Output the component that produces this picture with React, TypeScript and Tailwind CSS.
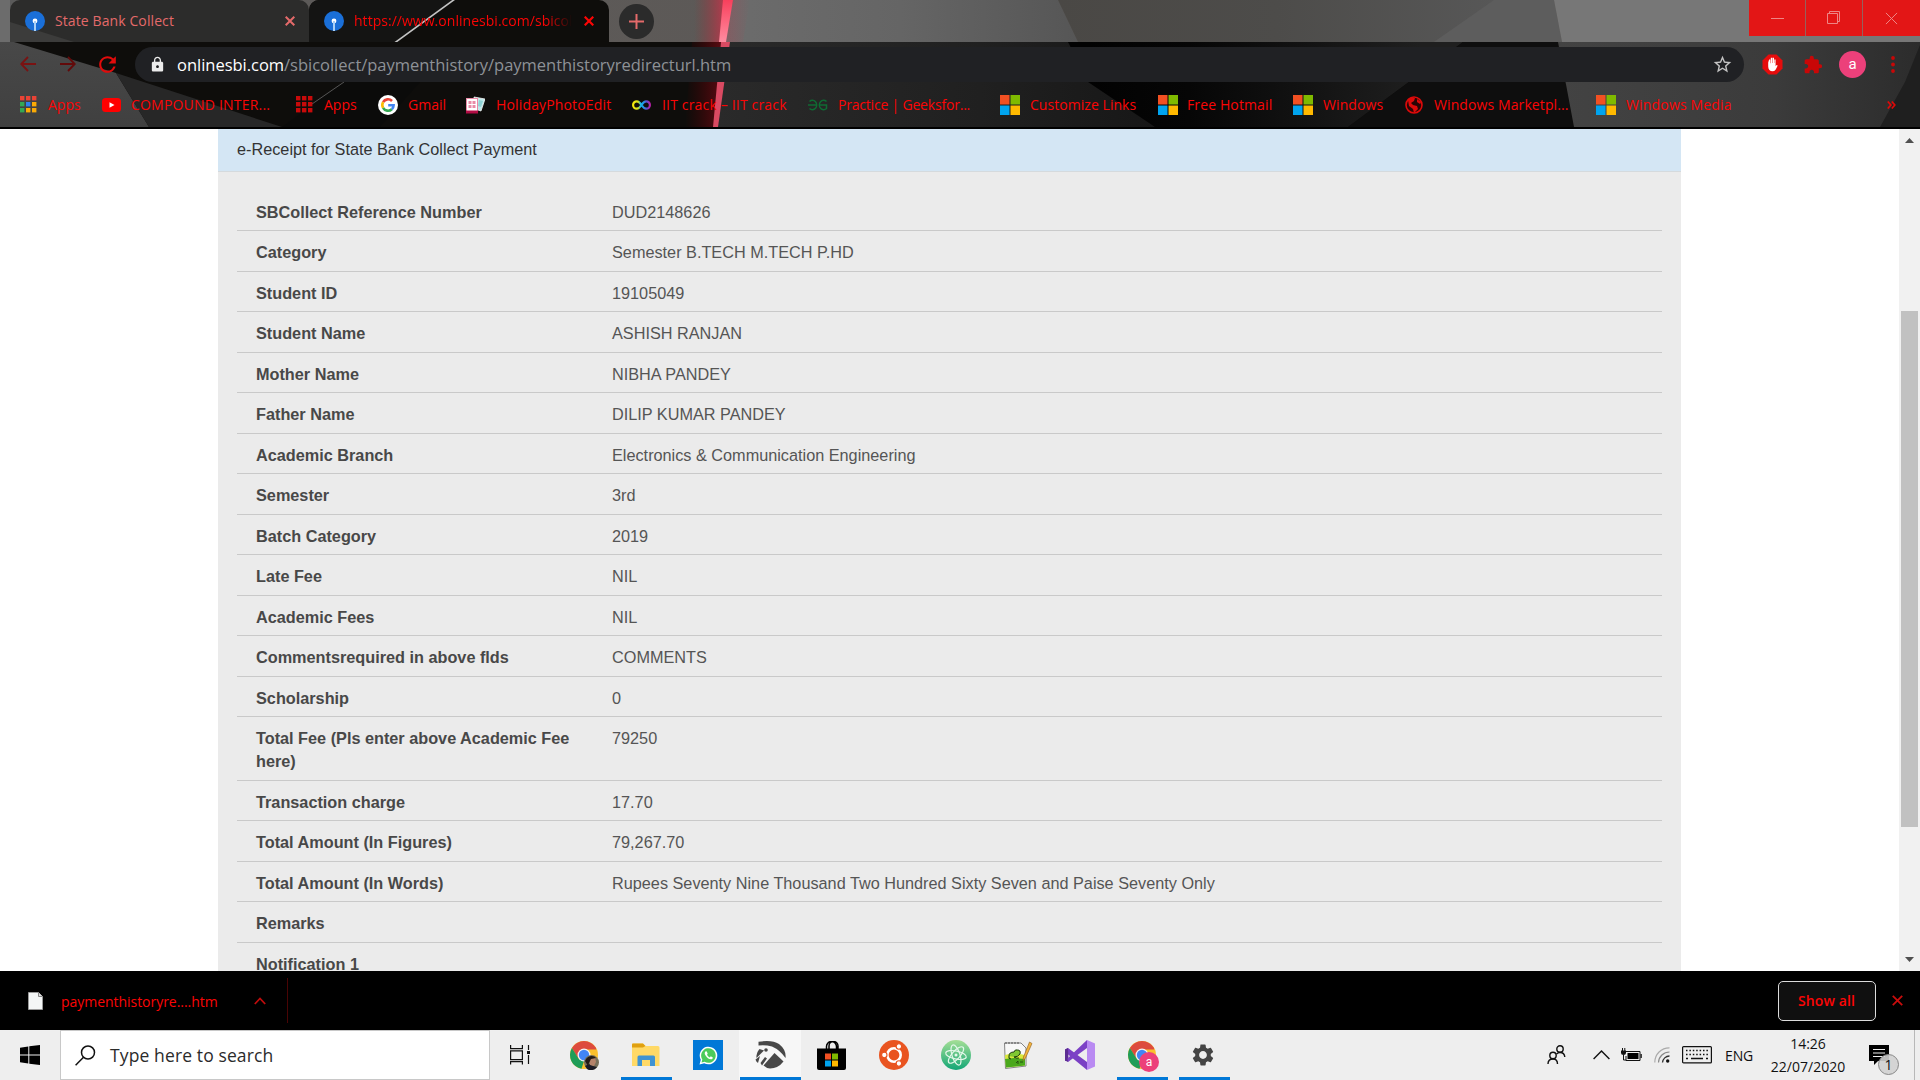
import React from "react";
import { MdSettings, MdExtension, MdLock, MdStarBorder, MdRefresh } from "react-icons/md";

const ui = "font-['Open_Sans','Noto_Sans',sans-serif]";

function FrameArt() {
  return (
    <svg className="absolute inset-0" width="1920" height="129" viewBox="0 0 1920 129">
      <defs>
        <linearGradient id="strip"><stop offset="0" stopColor="#5a5a5a" /><stop offset=".2" stopColor="#5d5a58" /><stop offset="1" stopColor="#5b5654" /></linearGradient>
        <linearGradient id="mid"><stop offset="0" stopColor="#6c6c6c" /><stop offset=".5" stopColor="#656565" /><stop offset="1" stopColor="#565656" /></linearGradient>
        <linearGradient id="slate"><stop offset="0" stopColor="#4a4845" /><stop offset=".5" stopColor="#4d4c4a" /><stop offset="1" stopColor="#575757" /></linearGradient>
        <linearGradient id="low"><stop offset="0" stopColor="#2a2a2a" /><stop offset=".6" stopColor="#202020" /><stop offset="1" stopColor="#171717" /></linearGradient>
        <linearGradient id="lowMid" gradientUnits="userSpaceOnUse" x1="1090" y1="0" x2="1420" y2="0"><stop offset="0" stopColor="#020202" /><stop offset=".3" stopColor="#060606" /><stop offset="1" stopColor="#1f1f1f" /></linearGradient>
        <linearGradient id="lowRight"><stop offset="0" stopColor="#434343" /><stop offset=".6" stopColor="#3b3b3b" /><stop offset="1" stopColor="#2c2c2c" /></linearGradient>
        <linearGradient id="glowTop"><stop offset="0" stopColor="#903030" stopOpacity="0" /><stop offset="1" stopColor="#d0304a" stopOpacity=".75" /></linearGradient>
        <linearGradient id="glowLow"><stop offset="0" stopColor="#500000" stopOpacity="0" /><stop offset="1" stopColor="#6c0a14" stopOpacity=".8" /></linearGradient>
        <linearGradient id="glowRight"><stop offset="0" stopColor="#b04050" stopOpacity=".35" /><stop offset="1" stopColor="#b04050" stopOpacity="0" /></linearGradient>
        <linearGradient id="beam" x1="0" y1="0" x2="0" y2="1"><stop offset="0" stopColor="#f8405c" /><stop offset="1" stopColor="#ff8ca0" /></linearGradient>
        <linearGradient id="bottomLeft" x1="0" y1="0" x2="0" y2="1"><stop offset="0" stopColor="#484848" /><stop offset="1" stopColor="#404040" /></linearGradient>
      </defs>
      <rect width="1920" height="42" fill="url(#strip)" />
      <rect width="10" height="42" fill="#6c6c6c" />
      <path d="M733 0H1058L1078 42H724Z" fill="url(#mid)" />
      <path d="M1058 0H1496L1434 42H1078Z" fill="url(#slate)" />
      <path d="M1494 0H1554L1562 42H1434Z" fill="#5d5d5d" />
      <path d="M1554 0H1920V42H1562Z" fill="#777777" />
      <path d="M694 0H724L720 42H694Z" fill="url(#glowTop)" />
      <path d="M732 0H750L743 42H725Z" fill="url(#glowRight)" />
      <path d="M723 0H733L726 42H719Z" fill="url(#beam)" />
      <rect y="42" width="1920" height="85" fill="#0e0d0b" />
      <path d="M0 42H14L116 73L149 127H0Z" fill="url(#bottomLeft)" />
      <path d="M116 73L282 127H149Z" fill="#272727" />
      <path d="M344 82H420L380 127H282Z" fill="#0b0b0a" />
      <path d="M726 42H1068L1155 127H717Z" fill="url(#low)" />
      <path d="M1068 42H1463L1348 127H1155L1088 82Z" fill="url(#lowMid)" />
      <path d="M1463 42H1558L1574 127H1348Z" fill="#0e0e0e" />
      <path d="M1558 42H1920V127H1574Z" fill="url(#lowRight)" />
      <path d="M1920 45V127H1880L1905 82Z" fill="#1f1f1f" />
      <path d="M692 42H721L714 127H685Z" fill="url(#glowLow)" />
      <path d="M721 42H730L718 127H713Z" fill="#d94a62" />
      <path d="M344 82L312 104" stroke="#555" strokeWidth="1" />
      <rect y="127" width="1920" height="2" fill="#000" />
    </svg>
  );
}

function SbiIcon() {
  return (
    <svg width="20" height="20" viewBox="0 0 20 20" className="shrink-0">
      <circle cx="10" cy="10" r="10" fill="#1a6fd8" />
      <circle cx="10" cy="10" r="2.400" fill="#fff" />
      <rect x="9" y="10" width="2" height="10" fill="#a9d0f7" />
    </svg>
  );
}

function Cross({ size, color, w = 2 }: { size: number; color: string; w?: number }) {
  return (
    <svg width={size} height={size} viewBox="0 0 10 10" className="shrink-0">
      <path d="M.7 .7L9.3 9.3M9.3 .7L.7 9.3" stroke={color} strokeWidth={(w * 10) / size} />
    </svg>
  );
}

function Microsoft() {
  return (
    <svg width="20" height="20" viewBox="0 0 20 20">
      <path d="M0 0H9.5V9.5H0Z" fill="#f25022" />
      <path d="M10.5 0H20V9.5H10.5Z" fill="#7fba00" />
      <path d="M0 10.5H9.5V20H0Z" fill="#00a4ef" />
      <path d="M10.5 10.5H20V20H10.5Z" fill="#ffb900" />
    </svg>
  );
}

function Grid({ colors }: { colors: string[] }) {
  return (
    <svg width="17" height="17" viewBox="0 0 17 17">
      {colors.map((c, i) => (
        <rect key={i} x={(i % 3) * 6} y={Math.floor(i / 3) * 6} width="4.400" height="4.400" fill={c} />
      ))}
    </svg>
  );
}

function GoogleG() {
  return (
    <svg width="20" height="20" viewBox="0 0 20 20">
      <circle cx="10" cy="10" r="10" fill="#fff" />
      <g fill="none" strokeWidth="2.600">
        <path d="M14 6A5.6 5.6 0 0 0 5.1 7.2" stroke="#ea4335" />
        <path d="M5.1 7.2A5.6 5.6 0 0 0 5.1 12.8" stroke="#fbbc05" />
        <path d="M5.1 12.8A5.6 5.6 0 0 0 13.8 14.2" stroke="#34a853" />
        <path d="M13.8 14.2A5.6 5.6 0 0 0 15.6 10.2H10.2" stroke="#4285f4" />
      </g>
    </svg>
  );
}

function HolidayIcon() {
  return (
    <svg width="19" height="18" viewBox="0 0 19 18">
      <path d="M8 1L19 3L15 15L9 13Z" fill="#bfe9ea" stroke="#f4f4f4" strokeWidth=".8" />
      <path d="M13 4L17 5L15 11L12 10Z" fill="#8fd2d4" />
      <rect x=".5" y="2.500" width="11" height="14" fill="#fff" stroke="#e889a6" />
      <path d="M2.500 5H5.500V8H2.500ZM6.500 5H9.500V8H6.500ZM2.500 9H5.500V12H2.500ZM6.500 9H9.500V12H6.500Z" fill="#e88aa6" />
      <rect x="0" y="14.500" width="12" height="3" fill="#b30d45" />
    </svg>
  );
}

function InfinityIcon() {
  return (
    <svg width="19" height="10" viewBox="0 0 19 10">
      <defs>
        <linearGradient id="inf"><stop offset="0" stopColor="#f5e90a" /><stop offset=".3" stopColor="#d6e01c" /><stop offset=".45" stopColor="#14b5e8" /><stop offset=".6" stopColor="#1e9be8" /><stop offset=".8" stopColor="#5a4fd0" /><stop offset="1" stopColor="#b520a8" /></linearGradient>
      </defs>
      <path d="M9.500 5C7.500 2 6.300 1.300 4.800 1.300A3.700 3.700 0 0 0 4.800 8.700C6.300 8.700 7.500 8 9.500 5C11.500 2 12.700 1.300 14.200 1.300A3.700 3.700 0 0 1 14.200 8.700C12.700 8.700 11.500 8 9.500 5Z" fill="none" stroke="url(#inf)" strokeWidth="2.200" />
    </svg>
  );
}

function GeeksIcon() {
  return (
    <svg width="20" height="12" viewBox="0 0 20 12" fill="none" stroke="#0f6b33" strokeWidth="1.500">
      <path d="M1.500 2.500A4.300 4.700 0 1 1 1.500 9.500M0 6H9" />
      <path d="M18.500 2.500A4.300 4.700 0 1 0 18.500 9.500V6H11" />
    </svg>
  );
}

function Globe() {
  return (
    <svg width="18" height="18" viewBox="0 0 18 18">
      <circle cx="9" cy="9" r="8" fill="#2a0505" stroke="#dd0a0a" strokeWidth="1.600" />
      <path d="M3 4C5 1 9 1 10 2L9 5L6 7L8 9L12 10L13 13L9 17L8 13L4 10Z" fill="#dd0a0a" />
      <path d="M12 3L16 6L15 8L12 6Z" fill="#dd0a0a" />
    </svg>
  );
}

function YouTube() {
  return (
    <svg width="19" height="14" viewBox="0 0 19 14">
      <rect width="19" height="14" rx="3.500" fill="#f00" />
      <path d="M7.500 4.200L12.500 7L7.500 9.800Z" fill="#fff" />
    </svg>
  );
}

const appColors = ["#ea4335", "#ea4335", "#ea4335", "#34a853", "#2f80ed", "#fbab05", "#34a853", "#fbab05", "#fbab05"];
const redColors = Array(9).fill("#c80a0a");

const bookmarks: { icon: React.ReactNode; label: string; box: string; text: string }[] = [
  { icon: <Grid colors={appColors} />, label: "Apps", box: "w-[82px]", text: "pl-[11px]" },
  { icon: <YouTube />, label: "COMPOUND INTER...", box: "w-[194px]", text: "pl-[10px] tracking-[0.2px]" },
  { icon: <Grid colors={redColors} />, label: "Apps", box: "w-[82px]", text: "pl-[11px]" },
  { icon: <GoogleG />, label: "Gmail", box: "w-[88px]", text: "pl-[10px]" },
  { icon: <HolidayIcon />, label: "HolidayPhotoEdit", box: "w-[166px]", text: "pl-[11px] tracking-[0.15px]" },
  { icon: <InfinityIcon />, label: "IIT crack – IIT crack", box: "w-[176px]", text: "pl-[11px] tracking-[0.17px]" },
  { icon: <GeeksIcon />, label: "Practice | Geeksfor...", box: "w-[192px]", text: "pl-[10px] tracking-[-0.2px]" },
  { icon: <Microsoft />, label: "Customize Links", box: "w-[158px]", text: "pl-[10px] tracking-[0.05px]" },
  { icon: <Microsoft />, label: "Free Hotmail", box: "w-[135px]", text: "pl-[9px] tracking-[0.12px]" },
  { icon: <Microsoft />, label: "Windows", box: "w-[112px]", text: "pl-[10px] tracking-[0.1px]" },
  { icon: <Globe />, label: "Windows Marketpl...", box: "w-[191px]", text: "pl-[11px] tracking-[0.1px]" },
  { icon: <Microsoft />, label: "Windows Media", box: "w-[150px]", text: "pl-[10px] tracking-[0.17px]" },
];

function BrowserFrame() {
  return (
    <header className={`relative h-[129px] shrink-0 overflow-hidden ${ui}`}>
      <FrameArt />
      <div className="relative flex h-[42px]">
        <div className="relative ml-[10px] flex h-[42px] w-[299px] items-center overflow-hidden rounded-t-[10px] bg-[#2c2c2b] pl-[15px] pr-[14px]">
          <svg className="absolute inset-0" width="299" height="42" viewBox="0 0 299 42">
            <path d="M0 22L64 42H0Z" fill="#3c3c3b" />
          </svg>
          <div className="relative flex w-full items-center">
            <SbiIcon />
            <span className="relative -top-px ml-[10px] flex-1 whitespace-nowrap text-[14px] tracking-[0.1px] text-[#e46a6a]">State Bank Collect</span>
            <Cross size={10} color="#e46a6a" />
          </div>
        </div>
        <div className="relative flex h-[42px] w-[300px] items-center overflow-hidden rounded-t-[10px] bg-[#0e0d0b] pl-[15px] pr-[15px]">
          <svg className="absolute inset-0" width="300" height="42" viewBox="0 0 300 42">
            <path d="M0 0H145L88 42H0Z" fill="#141413" />
            <path d="M146 -1L80 47" stroke="#c4c4c4" strokeWidth="1.600" />
          </svg>
          <div className="relative flex w-full items-center">
            <SbiIcon />
            <span className="relative -top-px ml-[10px] w-[218px] overflow-hidden whitespace-nowrap text-[14px] tracking-[0.03px] text-[#fb0505] [mask-image:linear-gradient(to_right,black_88%,transparent)]">https://www.onlinesbi.com/sbicollect</span>
            <span className="ml-auto"><Cross size={10} color="#fb0505" w={2.2} /></span>
          </div>
        </div>
        <div className="ml-[10px] mt-[4px] flex size-[35px] items-center justify-center rounded-full bg-[#2b2b2b]">
          <svg width="15" height="15" viewBox="0 0 15 15"><path d="M7.500 0V15M0 7.500H15" stroke="#e46a6a" strokeWidth="2" /></svg>
        </div>
        <div className="ml-auto grid h-[36px] w-[171px] grid-cols-[56px_58px_57px] bg-[#e31616]">
          <div className="flex items-center justify-center"><div className="h-px w-[13px] bg-[#ee8585]" /></div>
          <div className="flex items-center justify-center border-x border-[#96605c]">
            <svg width="14" height="14" viewBox="0 0 14 14" fill="none" stroke="#ee8585"><path d="M.5 2.500H10.500V12.500H.5ZM2.500 2.500V.5H12.500V10.500H10.500" /></svg>
          </div>
          <div className="flex items-center justify-center"><Cross size={13} color="#ee8585" w={1} /></div>
        </div>
      </div>

      <div className="relative flex h-[40px] items-center pt-px">
        <div className="flex w-[135px] items-center pl-[20px] pt-[3px]">
          <svg width="16" height="16" viewBox="0 0 16 16" fill="none" stroke="#7a1212" strokeWidth="1.800"><path d="M16 8H1.500M8 1L1.200 8L8 15" /></svg>
          <svg className="ml-[24px]" width="16" height="16" viewBox="0 0 16 16" fill="none" stroke="#620a0a" strokeWidth="1.800"><path d="M0 8H14.500M8 1L14.800 8L8 15" /></svg>
          <MdRefresh className="ml-[19px] size-[25px] text-[#e00b0b]" />
        </div>
        <div className="mt-[5px] mb-px flex h-[35px] w-[1609px] items-center rounded-full bg-[#202124] pl-[14px] pr-[11px]">
          <MdLock className="size-[17px] text-[#ececec]" />
          <span className="relative top-px ml-[11px] flex-1 whitespace-nowrap text-[16.5px] tracking-[-0.02px] text-[#8e9297]"><span className="text-white">onlinesbi.com</span>/sbicollect/paymenthistory/paymenthistoryredirecturl.htm</span>
          <MdStarBorder className="size-[21px] text-[#c4c4c4]" />
        </div>
        <div className="flex flex-1 items-center pt-[4px]">
          <svg className="ml-[18px]" width="21" height="21" viewBox="0 0 21 21">
            <path d="M6.500 .5H14.500L20.500 6.500V14.500L14.500 20.500H6.500L.5 14.500V6.500Z" fill="#e60c0c" />
            <path d="M6.200 8.500V12.500C6.200 15.500 8 17.300 10.500 17.300C13 17.300 14 15.500 15.700 11.500L14.600 11L13.600 12.300V5.500H12.300V9H12V3.800H10.600V9H10.200V3.800H8.800V9.300H8.400V5.500H7.100Z" fill="#fff" />
          </svg>
          <MdExtension className="ml-[20px] size-[20px] text-[#c80707]" />
          <div className="ml-[16px] flex size-[27px] items-center justify-center rounded-full bg-[#ec407a] font-['Roboto',sans-serif] text-[15px] text-white">a</div>
          <svg className="ml-[25px]" width="4" height="17" viewBox="0 0 4 17" fill="#c80707"><circle cx="2" cy="2" r="1.900" /><circle cx="2" cy="8.500" r="1.900" /><circle cx="2" cy="15" r="1.900" /></svg>
        </div>
      </div>

      <div className="relative flex h-[45px] items-center pl-[20px] text-[14px] text-[#fb0505]">
        {bookmarks.map((b, i) => (
          <div key={i} className={`flex shrink-0 items-center ${b.box}`}>
            {b.icon}
            <span className={`whitespace-nowrap ${b.text}`}>{b.label}</span>
          </div>
        ))}
        <svg className="ml-auto mr-[24px]" width="9" height="8" viewBox="0 0 9 8" fill="none" stroke="#e00808" strokeWidth="1.700"><path d="M.8 .5L3.800 4L.8 7.500M4.800 .5L7.800 4L4.800 7.500" /></svg>
      </div>
    </header>
  );
}

const rows: [string, string][] = [
  ["SBCollect Reference Number", "DUD2148626"],
  ["Category", "Semester B.TECH M.TECH P.HD"],
  ["Student ID", "19105049"],
  ["Student Name", "ASHISH RANJAN"],
  ["Mother Name", "NIBHA PANDEY"],
  ["Father Name", "DILIP KUMAR PANDEY"],
  ["Academic Branch", "Electronics & Communication Engineering"],
  ["Semester", "3rd"],
  ["Batch Category", "2019"],
  ["Late Fee", "NIL"],
  ["Academic Fees", "NIL"],
  ["Commentsrequired in above flds", "COMMENTS"],
  ["Scholarship", "0"],
  ["Total Fee (Pls enter above Academic Fee here)", "79250"],
  ["Transaction charge", "17.70"],
  ["Total Amount (In Figures)", "79,267.70"],
  ["Total Amount (In Words)", "Rupees Seventy Nine Thousand Two Hundred Sixty Seven and Paise Seventy Only"],
  ["Remarks", ""],
  ["Notification 1", ""],
];

function Receipt() {
  return (
    <main className="flex h-[842px] shrink-0 overflow-hidden bg-white font-['Liberation_Sans',Arial,sans-serif] text-[16.25px] leading-[23.4px]">
      <section className="ml-[218px] h-[900px] w-[1463px] bg-[#ebebeb]">
        <h1 className="h-[43px] border-b border-[#d5dadd] bg-[#d4e6f4] pl-[19px] pt-[8.500px] text-[#333]">e-Receipt for State Bank Collect Payment</h1>
        <dl className="mx-[19px] pt-[18.500px]">
          {rows.map(([k, v]) => (
            <div key={k} className="flex border-b border-[#c9c9c9] pt-[10px] pb-[6.100px]">
              <dt className="w-[356px] shrink-0 pl-[19px] pr-[20px] font-bold text-[#484848]">{k}</dt>
              <dd className="pl-[19px] text-[#555]">{v}</dd>
            </div>
          ))}
        </dl>
      </section>
      <div className="ml-auto flex w-[21px] flex-col items-center bg-[#f1f1f1] pt-[9px] pb-[9px]">
        <svg width="9" height="5" viewBox="0 0 9 5"><path d="M0 5L4.500 0L9 5Z" fill="#505050" /></svg>
        <div className="mt-[168px] h-[516px] w-[17px] bg-[#c1c1c1]" />
        <svg className="mt-auto" width="9" height="5" viewBox="0 0 9 5"><path d="M0 0L4.500 5L9 0Z" fill="#505050" /></svg>
      </div>
    </main>
  );
}

function DownloadShelf() {
  return (
    <div className={`flex h-[59px] shrink-0 items-center bg-black text-[14px] text-[#fb0505] ${ui}`}>
      <svg className="ml-[28px]" width="15" height="18" viewBox="0 0 15 18"><path d="M.5 .5H10.500L14.500 4.500V17.500H.5Z" fill="#f4f6f6" stroke="#999" /><path d="M10.500 .5V4.500H14.500" fill="#ddd" stroke="#888" /></svg>
      <span className="ml-[18px] w-[193px] whitespace-nowrap pt-[2px] tracking-[-0.04px]">paymenthistoryre....htm</span>
      <svg width="12" height="8" viewBox="0 0 12 8" fill="none" stroke="#c00c0c" strokeWidth="1.800"><path d="M.8 7L6 1.500L11.200 7" /></svg>
      <div className="ml-[21px] h-[45px] w-px bg-[#4a0404]" />
      <button className="ml-auto h-[40px] w-[98px] rounded-[5px] border border-[#dcdcdc] bg-[#101010] pr-px text-[14px] font-semibold tracking-[0.1px]">Show all</button>
      <div className="ml-[16px] mr-[17px]"><Cross size={11} color="#c80c0c" w={1.8} /></div>
    </div>
  );
}

function Chrome() {
  return (
    <svg width="28" height="28" viewBox="0 0 28 28">
      <circle cx="14" cy="14" r="14" fill="#fbc02d" />
      <path d="M1.900 7A14 14 0 0 1 26.100 7V8.500H14L8 17Z" fill="#dd4b3e" />
      <path d="M1.900 7L8.500 17.500L14 20L11.500 27.800A14 14 0 0 1 1.900 7Z" fill="#1f9d58" />
      <circle cx="14" cy="14" r="6.500" fill="#f4f4f4" />
      <circle cx="14" cy="14" r="5.200" fill="#4285f4" />
    </svg>
  );
}

const taskIcons: { icon: React.ReactNode; bar?: string; cell?: string }[] = [
  {
    icon: (
      <div className="relative">
        <Chrome />
        <svg className="absolute left-[14px] top-[14px]" width="15" height="15" viewBox="0 0 15 15">
          <circle cx="7.500" cy="7.500" r="7.500" fill="#77705a" />
          <path d="M1 11L5 9L9 11L13 12A7.500 7.500 0 0 1 3 14Z" fill="#1b1b25" />
          <path d="M5 3L11 2L12 7L10 11L6 10Z" fill="#b5836a" />
          <path d="M1 6C3 0 10 0 12 3L7 4L5 8L4 11Z" fill="#231a16" />
        </svg>
      </div>
    ),
  },
  {
    icon: (
      <svg width="28" height="24" viewBox="0 0 28 24">
        <path d="M0 1.500Q0 .5 1 .5H11L13.500 3H26Q27.500 3 27.500 4.500V23H0Z" fill="#ffd966" />
        <path d="M0 1.500Q0 .5 1 .5H11L13.500 3L11 4.500H0Z" fill="#e0a010" />
        <path d="M5.500 23V14Q5.500 12.500 7 12.500H21.500Q23 12.500 23 14V23H18V17H10V23Z" fill="#3f93d2" />
      </svg>
    ),
    bar: "w-[51px]",
  },
  {
    icon: (
      <div className="flex size-[30px] items-center justify-center bg-[#0078d7]">
        <svg width="19" height="19" viewBox="0 0 19 19">
          <path d="M.5 18.500L1.800 13.800A8.800 8.800 0 1 1 5.200 17.200Z" fill="#fff" />
          <path d="M2.500 16.500L3.300 13.500A7.300 7.300 0 1 1 5.700 15.800Z" fill="#4ccb5c" />
          <path d="M6.800 5.200C5.500 6 5.300 7.500 6.600 9.500C8 11.700 10 13.400 12 13.300C13.200 13.200 13.900 12.300 13.800 11.400L11.800 10.300L10.800 11.400C9.500 10.900 8.500 9.900 8 8.800L8.700 7.700L7.800 5.400Z" fill="#fff" />
        </svg>
      </div>
    ),
  },
  {
    icon: (
      <svg width="31" height="28" viewBox="0 0 31 28">
        <path d="M3.500 .8Q17 -1.500 24 3Q31.500 9 30.500 17Q25 9 17 5.500Q10 3.500 3.500 4.500Z" fill="#484848" />
        <circle cx="11" cy="9" r="1.800" fill="#484848" />
        <path d="M4.500 8L9 9.500L1.500 17Q1 12 4.500 8Z" fill="#484848" />
        <path d="M.5 18.500L5 15L3 22Q1 20.500 .5 18.500ZM5.500 22L10 16L12 17.500L7 24.500Z" fill="#484848" />
        <path d="M8.500 24.500L19.500 12L28.500 20.500Q23 27.500 15 27.500Q11 27 8.500 24.500Z" fill="#484848" />
      </svg>
    ),
    cell: "bg-[#f7f7f7]",
    bar: "w-[61px]",
  },
  {
    icon: (
      <svg className="mr-[2px]" width="29" height="29" viewBox="0 0 29 29">
        <path d="M9.500 9V5.500A5 5 0 0 1 19.500 5.500V9M12 8V5A4.500 4.500 0 0 1 21 5V8" fill="none" stroke="#000" strokeWidth="1.500" />
        <path d="M0 7.500H29V27Q29 29 27 29H2Q0 29 0 27Z" fill="#000" />
        <path d="M8 12.500H14V18.500H8Z" fill="#f25022" /><path d="M15 12.500H21V18.500H15Z" fill="#7fba00" /><path d="M8 19.500H14V25.500H8Z" fill="#00a4ef" /><path d="M15 19.500H21V25.500H15Z" fill="#ffb900" />
      </svg>
    ),
  },
  {
    icon: (
      <svg width="30" height="30" viewBox="0 0 30 30">
        <circle cx="15" cy="15" r="15" fill="#e95420" />
        <circle cx="15" cy="15" r="6.700" fill="none" stroke="#fff" strokeWidth="2.600" />
        <g fill="#fff" stroke="#e95420" strokeWidth="1.100"><circle cx="5.300" cy="15" r="2.700" /><circle cx="19.900" cy="6.500" r="2.700" /><circle cx="19.900" cy="23.500" r="2.700" /></g>
      </svg>
    ),
  },
  {
    icon: (
      <svg width="30" height="30" viewBox="0 0 30 30">
        <defs><linearGradient id="atom" x1="0" y1="0" x2="0" y2="1"><stop offset="0" stopColor="#a5df96" /><stop offset="1" stopColor="#12a676" /></linearGradient></defs>
        <circle cx="15" cy="15" r="15" fill="url(#atom)" />
        <g fill="none" stroke="#e4f7ea" strokeWidth="1.200"><ellipse cx="15" cy="15" rx="10.500" ry="4" transform="rotate(12 15 15)" /><ellipse cx="15" cy="15" rx="10.500" ry="4" transform="rotate(72 15 15)" /><ellipse cx="15" cy="15" rx="10.500" ry="4" transform="rotate(132 15 15)" /></g>
        <circle cx="15" cy="15" r="1.500" fill="#e4f7ea" />
      </svg>
    ),
  },
  {
    icon: (
      <svg width="29" height="28" viewBox="0 0 29 28">
        <path d="M.5 2H17L22 7V25L1.500 27.500Z" fill="#f8f8f8" stroke="#777" strokeWidth=".9" />
        <path d="M2 1V3M5 1V3M8 1V3M11 1V3M14 1V3" stroke="#555" />
        <path d="M1 14L10 12L21 14V24.500L2 26.500Z" fill="#d9e83c" />
        <path d="M1 18L10 17L21 18V24.500L2 26.500Z" fill="#4aa81c" />
        <path d="M5 15Q5 11 10 11Q11 8 13.500 9Q17 9 16 13Q14 16 10 16Q13 18 15 17M7 18Q4 18 5 15" fill="#7fc832" stroke="#1e3d10" />
        <path d="M12 22L14 20V23M16 21H19" fill="none" stroke="#1e3d10" strokeWidth=".8" />
        <path d="M25.500 1L28 2.500L21.500 17L19 19.500L19.500 16Z" fill="#f4b43c" stroke="#8a5a1c" strokeWidth=".6" />
      </svg>
    ),
  },
  {
    icon: (
      <svg width="30" height="30" viewBox="0 0 30 30">
        <path d="M0 9.500L3 8L22 22V30L2.500 14L3 20L0 21Z" fill="#7a3fc4" />
        <path d="M0 9.500L3 8L3.500 19.500L3 22L0 20.500Z" fill="#5c2d91" />
        <path d="M3 22L2.500 18.500L22 0V8Z" fill="#7c41c6" />
        <path d="M22 0L30 3.500V26.500L22 30Z" fill="#b98af2" />
      </svg>
    ),
  },
  {
    icon: (
      <div className="relative">
        <Chrome />
        <div className="absolute left-[11px] top-[11px] flex size-[20px] items-center justify-center rounded-full bg-[#ec407a] font-['Roboto',sans-serif] text-[12px] text-white">a</div>
      </div>
    ),
    bar: "w-[51px]",
  },
  { icon: <MdSettings className="mr-[2px] size-[26px] text-[#444]" />, bar: "w-[51px]" },
];

function Taskbar() {
  return (
    <footer className={`flex h-[50px] shrink-0 bg-[#eeeeee] text-[#111] ${ui}`}>
      <div className="flex w-[60px] items-center justify-center">
        <svg width="20" height="20" viewBox="0 0 20 20"><path d="M0 2.800L8.300 1.500V9.500H0ZM9.300 1.300L20 0V9.500H9.300ZM0 10.500H8.300V18.500L0 17.200ZM9.300 10.500H20V20L9.300 18.700Z" /></svg>
      </div>
      <div className="flex w-[430px] items-center border border-[#c8c8c8] bg-white pl-[14px]">
        <svg width="21" height="21" viewBox="0 0 21 21" fill="none" stroke="#111" strokeWidth="1.500"><circle cx="13" cy="7.500" r="6.500" /><path d="M8.500 12.200L.6 20.200" /></svg>
        <span className="ml-[14px] whitespace-nowrap text-[17.5px] tracking-[0.12px] text-[#2b2b2b]">Type here to search</span>
      </div>
      <div className="flex w-[63px] items-center pl-[20px]">
        <svg width="20" height="20" viewBox="0 0 20 20" fill="none" stroke="#111" strokeWidth="1.200"><path d="M.6 0V3.600H12.400V0M.6 5.900H12.400V14.600H.6ZM.6 19.500V16.600H12.400V19.500M18.500 0V5M18.500 10V19" /><path d="M17 6H20V9H17Z" fill="#111" stroke="none" /></svg>
      </div>
      {taskIcons.map((t, i) => (
        <div key={i} className={`relative flex w-[62px] items-center justify-center ${t.cell ?? ""}`}>
          {t.icon}
          {t.bar && <div className="absolute inset-x-0 bottom-0 flex justify-center"><div className={`h-[3px] bg-[#0078d7] ${t.bar}`} /></div>}
        </div>
      ))}
      <div className="ml-auto flex items-center">
        <svg width="19" height="20" viewBox="0 0 19 20" fill="none" stroke="#111" strokeWidth="1.400"><circle cx="13" cy="4" r="3.200" /><circle cx="6" cy="10.500" r="3.200" /><path d="M1 19Q1 14 6 14Q10.500 14 10.500 19M9.500 9Q11 7.500 13 7.500Q17.500 7.500 17.800 12" /></svg>
        <svg className="ml-[27px]" width="17" height="10" viewBox="0 0 17 10" fill="none" stroke="#111" strokeWidth="1.400"><path d="M.6 9L8.500 1L16.400 9" /></svg>
        <svg className="ml-[11px]" width="21" height="14" viewBox="0 0 21 14"><path d="M4.500 3.500H19V12.500H5V8" fill="none" stroke="#111" /><path d="M6.500 5H17.500V11H6.500Z" fill="#000" /><path d="M19.500 6H20.800V10H19.500Z" fill="#111" /><path d="M0 2.500H5V5Q5 7 2.500 7Q0 7 0 5ZM1 0H2V2.500H1ZM3.300 0H4.300V2.500H3.300Z" fill="#111" /><path d="M2.500 7V12H5" fill="none" stroke="#111" /></svg>
        <svg className="ml-[12px]" width="16" height="16" viewBox="0 0 16 16" fill="none"><path d="M.8 15.500A14.500 14.500 0 0 1 15.500 .8" stroke="#aaa" strokeWidth="1.200" /><path d="M4.500 15.500A11 11 0 0 1 15.500 5" stroke="#888" strokeWidth="1.200" /><path d="M8.500 15.500A7 7 0 0 1 15.500 9" stroke="#333" strokeWidth="1.300" /><circle cx="13.700" cy="14" r="1.700" fill="#111" /></svg>
        <svg className="ml-[12px]" width="30" height="18" viewBox="0 0 30 18"><rect x=".6" y=".6" width="28.800" height="16.300" rx="1" fill="none" stroke="#111" strokeWidth="1.200" /><path d="M4 4.500H26M4 8.500H26" stroke="#111" strokeWidth="1.300" strokeDasharray="1.500 1.900" /><path d="M4 12.500H6M9 12.500H21M24 12.500H26" stroke="#111" strokeWidth="1.300" /></svg>
        <span className="ml-[13px] w-[29px] text-[14px] tracking-[-0.1px]">ENG</span>
        <div className="ml-[16px] flex w-[76px] flex-col items-center whitespace-nowrap text-[14px] leading-[23px]"><span>14:26</span><span>22/07/2020</span></div>
        <div className="relative ml-[23px] size-[20px]">
          <svg width="20" height="20" viewBox="0 0 20 20"><path d="M0 0H20V16H9L5 20V16H0Z" fill="#000" /><path d="M4 4.500H16M4 8H16M4 11.500H16" stroke="#eee" strokeWidth="1.200" /></svg>
          <div className="absolute left-[9px] top-[9px] flex size-[21px] items-center justify-center rounded-full border border-[#888] bg-[#d0d0d0]/90 text-[14px]">1</div>
        </div>
        <div className="ml-[25px] mr-[5px] h-[50px] w-px bg-[#b8b8b8]" />
      </div>
    </footer>
  );
}

export default function App() {
  return (
    <div className="flex h-[1080px] w-[1920px] flex-col overflow-hidden bg-white">
      <BrowserFrame />
      <Receipt />
      <DownloadShelf />
      <Taskbar />
    </div>
  );
}
